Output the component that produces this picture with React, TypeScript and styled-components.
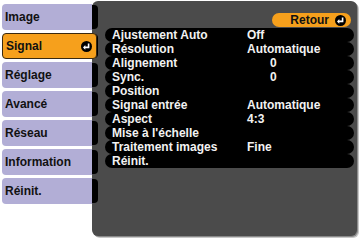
import React from 'react';
import styled, { createGlobalStyle } from 'styled-components';

const Global = createGlobalStyle`
  html, body {
    margin: 0;
    padding: 0;
    background: #ffffff;
  }
  body {
    font-family: "Liberation Sans", Arial, sans-serif;
  }
`;

const Screen = styled.div`
  width: 360px;
  height: 240px;
  display: flex;
  overflow: hidden;
  background: #ffffff;
`;

const Sidebar = styled.nav`
  width: 92px;
  flex: none;
  display: flex;
  flex-direction: column;
  gap: 3px;
  padding-top: 4px;
  box-sizing: border-box;
`;

const MenuItem = styled.div<{ $active?: boolean }>`
  position: relative;
  z-index: ${p => (p.$active ? 2 : 0)};
  height: 26px;
  margin-left: 2px;
  margin-right: ${p => (p.$active ? '-5px' : '0')};
  padding: 0 4px 0 3px;
  display: flex;
  align-items: center;
  justify-content: space-between;
  box-sizing: border-box;
  border-radius: ${p => (p.$active ? '4px' : '4px 0 0 4px')};
  background: ${p => (p.$active ? '#f6a01c' : '#b2aed6')};
  border: ${p => (p.$active ? '1px solid #3a2a10' : 'none')};
  font-size: 12px;
  font-weight: bold;
  color: #111;
`;

const Panel = styled.section`
  flex: 1;
  margin: 1px 3px 0 0;
  height: 235px;
  display: flex;
  border-radius: 6px;
  background: #4b4b4b;
  box-shadow: 1px 1px 0 #8a8a8a, 2px 2px 0 #c8c8c8;
`;

const TabColumn = styled.div`
  width: 6px;
  flex: none;
  display: flex;
  flex-direction: column;
  gap: 5px;
  padding-top: 4px;
`;

const Tab = styled.div`
  height: 24px;
  background: #000;
  border-radius: 0 4px 4px 0;
`;

const Content = styled.div`
  flex: 1;
  display: flex;
  flex-direction: column;
  padding: 12px 3px 0 7px;
`;

const Header = styled.div`
  height: 14px;
  display: flex;
  justify-content: flex-end;
  padding-right: 3px;
`;

const BackButton = styled.div`
  width: 79px;
  height: 14px;
  box-sizing: border-box;
  display: flex;
  align-items: center;
  justify-content: flex-end;
  gap: 6px;
  padding-right: 5px;
  border-radius: 7px;
  background: #f6a01c;
  font-size: 12px;
  font-weight: bold;
  color: #111;
`;

const List = styled.div`
  display: flex;
  flex-direction: column;
  margin-top: 1px;
`;

const Row = styled.div`
  height: 14px;
  display: grid;
  grid-template-columns: 135px 1fr;
  align-items: center;
  padding-left: 7px;
  border-radius: 7px;
  background: #000;
  font-size: 12px;
  font-weight: bold;
  color: #f2f2f2;
  line-height: 14px;
  white-space: nowrap;
`;

const Value = styled.span<{ $indent?: number }>`
  padding-left: ${p => p.$indent ?? 0}px;
`;

function EnterIcon() {
  return (
    <svg width="11" height="11" viewBox="0 0 11 11">
      <circle cx="5.5" cy="5.5" r="5.5" fill="#000" />
      <path d="M7.6 2.4 V6.4 H4" stroke="#fff" strokeWidth="1.6" fill="none" />
      <path d="M4.3 4.1 L2 6.4 L4.3 8.7 Z" fill="#fff" />
    </svg>
  );
}

const menu = ['Image', 'Signal', 'Réglage', 'Avancé', 'Réseau', 'Information', 'Réinit.'];

const rows: { label: string; value?: string; indent?: number }[] = [
  { label: 'Ajustement Auto', value: 'Off' },
  { label: 'Résolution', value: 'Automatique' },
  { label: 'Alignement', value: '0', indent: 23 },
  { label: 'Sync.', value: '0', indent: 23 },
  { label: 'Position' },
  { label: 'Signal entrée', value: 'Automatique' },
  { label: 'Aspect', value: '4:3' },
  { label: "Mise à l'échelle" },
  { label: 'Traitement images', value: 'Fine' },
  { label: 'Réinit.' },
];

export default function App() {
  return (
    <>
      <Global />
      <Screen>
        <Sidebar>
          {menu.map(m => (
            <MenuItem key={m} $active={m === 'Signal'}>
              {m}
              {m === 'Signal' && <EnterIcon />}
            </MenuItem>
          ))}
        </Sidebar>
        <Panel>
          <TabColumn>
            {menu.map(m => (
              <Tab key={m} />
            ))}
          </TabColumn>
          <Content>
            <Header>
              <BackButton>
                Retour
                <EnterIcon />
              </BackButton>
            </Header>
            <List>
              {rows.map(r => (
                <Row key={r.label}>
                  <span>{r.label}</span>
                  <Value $indent={r.indent}>{r.value}</Value>
                </Row>
              ))}
            </List>
          </Content>
        </Panel>
      </Screen>
    </>
  );
}
